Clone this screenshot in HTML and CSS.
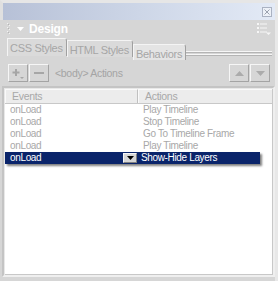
FILE: index.html
```html
<!DOCTYPE html>
<html>
<head>
<meta charset="utf-8">
<link rel="stylesheet" href="styles.css">
</head>
<body>
<div class="win">
  <div class="titlebar">
    <span class="close"><svg width="6" height="6" viewBox="0 0 6 6"><path d="M0.5 0.5L5.5 5.5M5.5 0.5L0.5 5.5" stroke="#9aa1ae" stroke-width="1"/></svg></span>
  </div>
  <div class="head">
    <svg class="grip" width="3" height="12" viewBox="0 0 3 12"><g fill="#f2f2f2"><rect x="0" y="0" width="1" height="1"/><rect x="2" y="2" width="1" height="1"/><rect x="0" y="4" width="1" height="1"/><rect x="2" y="6" width="1" height="1"/><rect x="0" y="8" width="1" height="1"/><rect x="2" y="10" width="1" height="1"/></g><g fill="#b4b4b4"><rect x="1" y="1" width="1" height="1"/><rect x="1" y="5" width="1" height="1"/><rect x="1" y="9" width="1" height="1"/></g></svg>
    <svg class="tri" width="7" height="4" viewBox="0 0 7 4"><path d="M0 0H7L3.5 4Z" fill="#ffffff"/></svg>
    <span class="title">Design</span>
    <svg class="menu" width="14" height="12" viewBox="0 0 14 12"><g fill="#f6f6f6"><rect x="0" y="0" width="2" height="2"/><rect x="3" y="0.5" width="7" height="1"/><rect x="0" y="4" width="2" height="2"/><rect x="3" y="4.5" width="7" height="1"/><rect x="0" y="8" width="2" height="2"/><rect x="3" y="8.5" width="7" height="1"/><path d="M9 9.5H14L11.5 12Z"/></g></svg>
  </div>
  <div class="tabs">
    <div class="tab t1">CSS Styles</div>
    <div class="tab t2">HTML Styles</div>
    <div class="tab active">Behaviors</div>
    <div class="tabline"></div>
  </div>
  <div class="toolbar">
    <span class="btn"><svg width="12" height="11" viewBox="0 0 12 11"><path d="M4 1V8M0.5 4.5H7.5" stroke="#a6a6a6" stroke-width="2"/><path d="M8 9H12L10 11Z" fill="#a6a6a6"/></svg></span>
    <span class="btn"><svg width="10" height="2" viewBox="0 0 10 2"><rect x="0" y="0" width="10" height="2" fill="#a6a6a6"/></svg></span>
    <span class="label">&lt;body&gt; Actions</span>
    <span class="spacer"></span>
    <span class="btn"><svg width="9" height="5" viewBox="0 0 9 5"><path d="M4.5 0L9 5H0Z" fill="#ababab"/></svg></span>
    <span class="btn"><svg width="9" height="5" viewBox="0 0 9 5"><path d="M0 0H9L4.5 5Z" fill="#ababab"/></svg></span>
  </div>
  <div class="grid">
    <div class="ghead">
      <div class="hc hc1">Events</div>
      <div class="hc hc2">Actions</div>
    </div>
    <div class="row"><div class="c1">onLoad</div><div class="c2">Play Timeline</div></div>
    <div class="row"><div class="c1">onLoad</div><div class="c2">Stop Timeline</div></div>
    <div class="row"><div class="c1">onLoad</div><div class="c2">Go To Timeline Frame</div></div>
    <div class="row"><div class="c1">onLoad</div><div class="c2">Play Timeline</div></div>
    <div class="row sel"><div class="c1">onLoad<span class="drop"><svg width="7" height="4" viewBox="0 0 7 4"><path d="M0 0H7L3.5 4Z" fill="#000"/></svg></span></div><div class="c2">Show-Hide Layers</div></div>
  </div>
</div>
</body>
</html>
```
FILE: styles.css
```css
html, body {
  margin: 0;
  padding: 0;
}
body {
  width: 278px;
  height: 281px;
  overflow: hidden;
  background: #d6d6d6;
  font-family: "Liberation Sans", Arial, sans-serif;
}
.win {
  height: 281px;
  box-sizing: border-box;
  border-right: 3px solid #e8e8e8;
  display: flex;
  flex-direction: column;
}
.titlebar {
  height: 17px;
  border-top: 3px solid #e6e6e6;
  border-left: 3px solid #e0e0e0;
  background: linear-gradient(90deg, #b7c1d7 0%, #cdd6e7 50%, #e3eaf6 100%);
  display: flex;
  justify-content: flex-end;
  align-items: center;
  padding-right: 3px;
}
.close {
  width: 10px;
  height: 10px;
  box-sizing: border-box;
  border: 1px solid #aab2c2;
  background: #edf1f8;
  display: flex;
  align-items: center;
  justify-content: center;
}
.head {
  height: 17px;
  display: flex;
  align-items: center;
  padding-left: 7px;
  padding-right: 4px;
}
.grip {
  display: block;
}
.tri {
  display: block;
  margin-left: 7px;
}
.title {
  margin-left: 5px;
  color: #ffffff;
  font-weight: bold;
  font-size: 12px;
  letter-spacing: -0.2px;
}
.menu {
  display: block;
  margin-left: auto;
}
.tabs {
  height: 23px;
  display: flex;
  align-items: flex-start;
  padding-left: 7px;
  padding-right: 3px;
}
.tab {
  box-sizing: border-box;
  font-size: 11px;
  letter-spacing: -0.3px;
  color: #a6a6a6;
  border: 1px solid;
  border-color: #f4f4f4 #a0a0a0 #a0a0a0 #f4f4f4;
  border-bottom: none;
  border-radius: 0 3px 0 0;
  padding: 0 3px 0 2px;
  background: #dadada;
  line-height: 14px;
}
.t1 {
  margin-top: 1px;
  height: 18px;
  padding-top: 2px;
}
.t2 {
  margin-top: 3px;
  height: 17px;
  padding-top: 2px;
}
.active {
  margin-top: 7px;
  height: 16px;
  padding-top: 2px;
  background: #e4e4e4;
}
.tabline {
  flex: 1;
  margin-top: 14px;
  height: 6px;
  background: linear-gradient(#f6f6f6 0 1px, #b4b4b4 1px 2px, transparent 2px 3px, #f6f6f6 3px 4px, #b4b4b4 4px 5px, transparent 5px);
}
.toolbar {
  height: 26px;
  display: flex;
  align-items: center;
  padding-left: 8px;
  padding-right: 5px;
  gap: 1px;
}
.btn {
  width: 20px;
  height: 18px;
  box-sizing: border-box;
  border: 1px solid;
  border-color: #f6f6f6 #a4a4a4 #a4a4a4 #f6f6f6;
  display: flex;
  align-items: center;
  justify-content: center;
}
.label {
  margin-left: 5px;
  font-size: 10.5px;
  letter-spacing: -0.3px;
  color: #a4a4a4;
}
.spacer {
  flex: 1;
}
.grid {
  flex: 1;
  margin: 0 0 4px 2px;
  background: #ffffff;
  border: 2px solid;
  border-color: #c4c4c4 #efefef #efefef #c4c4c4;
  box-shadow: inset 1px 1px 0 #e8e8e8, inset -1px -1px 0 #c8c8c8;
  padding: 1px;
}
.ghead {
  display: flex;
  height: 14px;
  background: #ececec;
  border-bottom: 1px solid #c8c8c8;
  font-size: 10.5px;
  letter-spacing: -0.3px;
  color: #a8a8a8;
  line-height: 13px;
}
.hc {
  box-sizing: border-box;
  border-top: 1px solid #fafafa;
  border-left: 1px solid #fafafa;
}
.hc1 {
  width: 133px;
  padding-left: 6px;
  border-right: 1px solid #c0c0c0;
}
.hc2 {
  flex: 1;
  padding-left: 6px;
}
.row {
  display: flex;
  height: 12px;
  line-height: 12px;
  font-size: 10px;
  letter-spacing: -0.35px;
  color: #a8a8a8;
}
.c1 {
  width: 133px;
  box-sizing: border-box;
  padding-left: 5px;
  display: flex;
  align-items: center;
}
.c2 {
  padding-left: 5px;
}
.sel {
  width: 255px;
  background: #0a246a;
  color: #ffffff;
  box-shadow: 2px 2px 2px rgba(0, 0, 0, 0.5);
}
.sel .c2 {
  padding-left: 3px;
}
.drop {
  margin-left: auto;
  margin-right: 1px;
  width: 14px;
  height: 10px;
  box-sizing: border-box;
  background: #d6d6d6;
  border: 1px solid;
  border-color: #f6f6f6 #808080 #808080 #f6f6f6;
  display: flex;
  align-items: center;
  justify-content: center;
}
```
